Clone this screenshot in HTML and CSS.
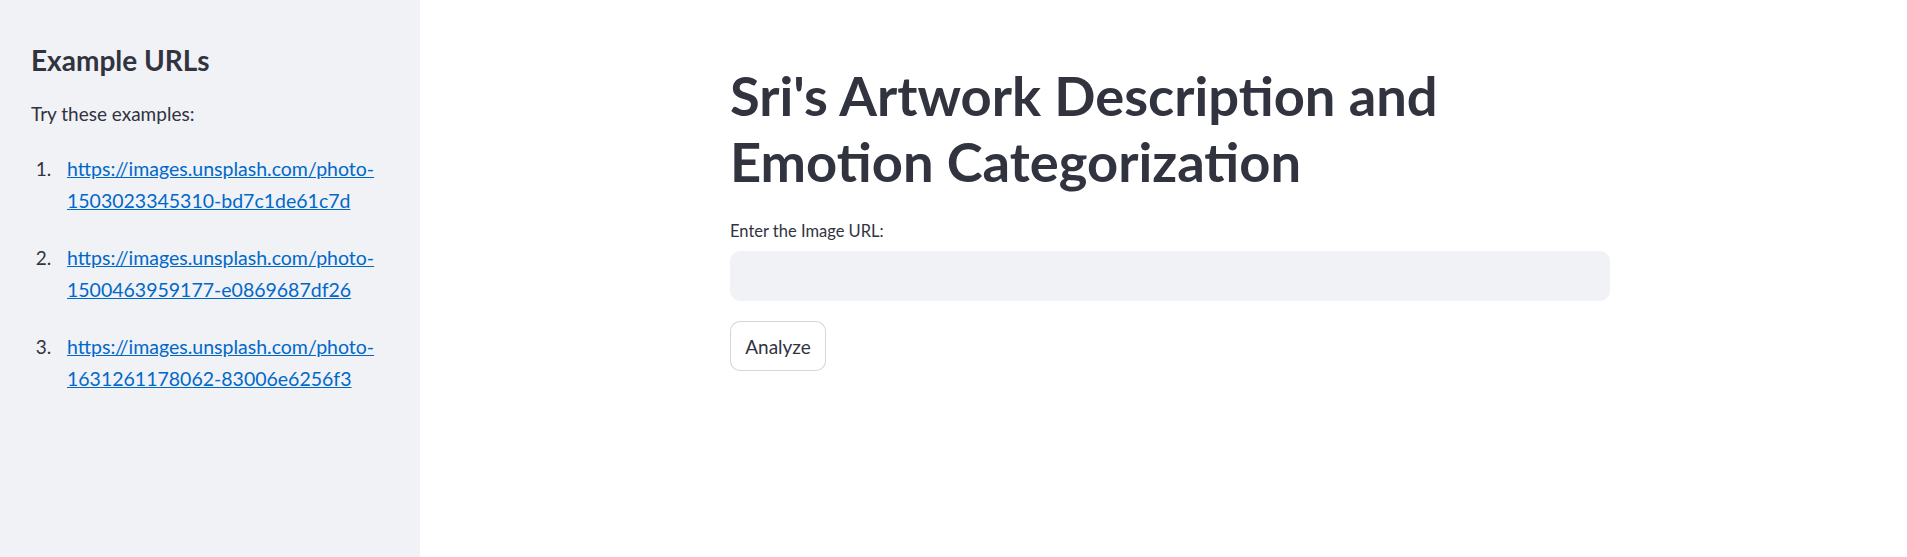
FILE: index.html
```html
<!DOCTYPE html>
<html lang="en">
<head>
<meta charset="utf-8">
<title>Sri's Artwork Description and Emotion Categorization</title>
<link rel="stylesheet" href="styles.css">
</head>
<body>
<div class="app">
  <aside class="sidebar">
    <h2 class="side-title">Example URLs</h2>
    <p class="side-text">Try these examples:</p>
    <ol class="url-list">
      <li><a href="#">https://images.unsplash.com/photo-1503023345310-bd7c1de61c7d</a></li>
      <li><a href="#">https://images.unsplash.com/photo-1500463959177-e0869687df26</a></li>
      <li><a href="#">https://images.unsplash.com/photo-1631261178062-83006e6256f3</a></li>
    </ol>
  </aside>
  <main class="main">
    <div class="block">
      <h1 class="title">Sri's Artwork Description and Emotion Categorization</h1>
      <label class="field-label" for="url">Enter the Image URL:</label>
      <input class="text-input" id="url" type="text">
      <button class="btn" type="button">Analyze</button>
    </div>
  </main>
</div>
</body>
</html>
```
FILE: styles.css
```css
* { box-sizing: border-box; }
html, body { margin: 0; padding: 0; }
body {
  font-family: Lato, "Noto Sans", "Liberation Sans", sans-serif;
  color: #31333f;
  background: #ffffff;
}
.app {
  display: flex;
  height: 100vh;
  overflow: hidden;
}
.sidebar {
  width: 420px;
  flex: none;
  background: #f0f2f6;
  padding: 42px 30px 0 31px;
}
.side-title {
  margin: 0;
  font-size: 28px;
  line-height: 36px;
  font-weight: 700;
  color: #31333f;
}
.side-text {
  margin: 20px 0 0;
  font-size: 19px;
  line-height: 32px;
}
.url-list {
  margin: 23px 0 0;
  padding-left: 25px;
  font-size: 19px;
  line-height: 32px;
}
.url-list li {
  margin-bottom: 25px;
  padding-left: 11px;
}
.url-list li::marker { color: #31333f; }
.url-list a {
  color: #0068c9;
  font-size: 19.5px;
  text-decoration: underline;
}
.main {
  flex: 1;
  padding-left: 13px;
}
.block {
  max-width: 880px;
  margin: 0 auto;
  padding-top: 62px;
  display: flex;
  flex-direction: column;
  align-items: flex-start;
}
.title {
  margin: 0;
  font-size: 54.3px;
  line-height: 66px;
  font-weight: 700;
  color: #31333f;
}
.field-label {
  margin-top: 26px;
  font-size: 16.5px;
  line-height: 22px;
}
.text-input {
  margin-top: 9px;
  width: 100%;
  height: 50px;
  border: none;
  border-radius: 10px;
  background: #f0f2f6;
  outline: none;
  font: inherit;
}
.btn {
  margin-top: 20px;
  width: 96px;
  height: 50px;
  border: 1px solid rgba(49, 51, 63, 0.2);
  border-radius: 10px;
  background: #ffffff;
  color: #31333f;
  font-family: inherit;
  font-size: 19px;
  padding: 0;
}
```
